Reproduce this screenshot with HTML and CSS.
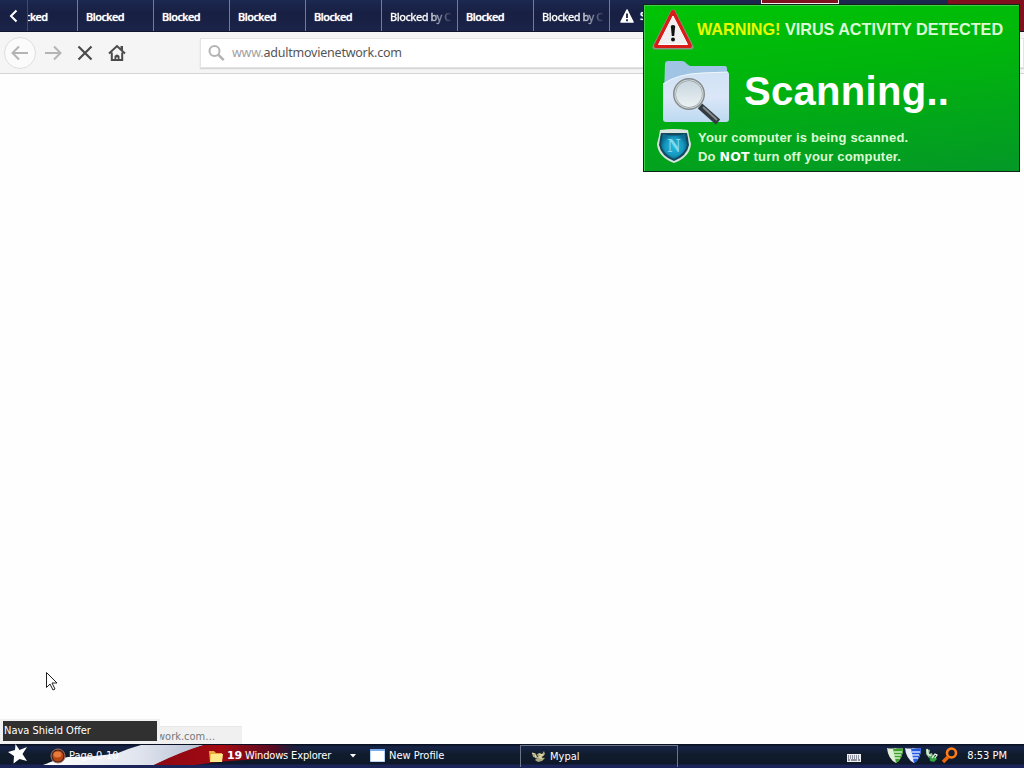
FILE: index.html
```html
<!DOCTYPE html>
<html lang="en">

<head>
    <meta charset="UTF-8">
    <title>Mypal</title>
    <link rel="stylesheet" href="styles.css">
</head>

<body>
    <div class="desktop">
        <!-- Tabs -->
        <header class="tabs">
            <div class="tab-scroll">
                <svg width="28" height="31" viewBox="0 0 28 31"><path d="M16.500 10.500L11 16l5.500 5.500" fill="none" stroke="#fff" stroke-width="2"/></svg>
            </div>
            <div class="tab first">cked</div>
            <div class="tab">Blocked</div>
            <div class="tab">Blocked</div>
            <div class="tab">Blocked</div>
            <div class="tab">Blocked</div>
            <div class="tab fade">Blocked by C</div>
            <div class="tab">Blocked</div>
            <div class="tab fade">Blocked by C</div>
            <div class="tab alert">
                <svg width="14" height="14" viewBox="0 0 14 14"><path d="M7 1L13 13H1Z" fill="#fff" stroke="#fff" stroke-width="1.600" stroke-linejoin="round"/><path d="M7 4.500v4.500M7 10.300v1.900" stroke="#1a2142" stroke-width="1.800"/></svg>
                S
            </div>
            <div class="flag-red"></div>
        </header>

        <!-- Navigation bar -->
        <nav class="toolbar">
            <div class="nav-btn back">
                <svg width="20" height="20" viewBox="0 0 20 20"><path d="M18 10H3M9 3.500L2.500 10 9 16.500" fill="none" stroke="#b4b4b4" stroke-width="2"/></svg>
            </div>
            <div class="nav-btn">
                <svg width="20" height="20" viewBox="0 0 20 20"><path d="M2 10h15M11 3.500l6.500 6.500-6.500 6.500" fill="none" stroke="#b4b4b4" stroke-width="2"/></svg>
            </div>
            <div class="nav-btn">
                <svg width="20" height="20" viewBox="0 0 20 20"><path d="M3.500 3.500l13 13M16.500 3.500l-13 13" fill="none" stroke="#4b4b4b" stroke-width="2.200"/></svg>
            </div>
            <div class="nav-btn">
                <svg width="20" height="20" viewBox="0 0 20 20"><path d="M2 10.500L10 3l8 7.500M4.800 9.500V17h10.400V9.500" fill="none" stroke="#4b4b4b" stroke-width="2"/><path d="M13.500 3h2.500v5l-2.500-2.500zM7.500 18v-5q2.500-3 5 0v5h-1.700v-3.500H9.200V18z" fill="#4b4b4b"/></svg>
            </div>
            <div class="url-bar">
                <svg width="18" height="18" viewBox="0 0 18 18"><circle cx="6.500" cy="7" r="5" fill="none" stroke="#b3b3b3" stroke-width="2"/><path d="M10.200 10.700l5.500 5.500" stroke="#b3b3b3" stroke-width="2.600"/></svg>
                <span class="url"><i>www.</i>adultmovienetwork.com</span>
            </div>
        </nav>

        <main class="page"></main>

        <!-- Taskbar -->
        <footer class="taskbar">
            <svg class="flag" width="340" height="22" viewBox="0 0 340 22">
                <defs>
                    <linearGradient id="white" x1="0" x2="1"><stop offset="0" stop-color="#fff"/><stop offset=".6" stop-color="#e0e4ee"/><stop offset="1" stop-color="#b5bfd2"/></linearGradient>
                    <linearGradient id="red" x1="0" x2="1"><stop offset="0" stop-color="#8c0812"/><stop offset=".45" stop-color="#a30a12"/><stop offset=".8" stop-color="#560b22"/><stop offset="1" stop-color="#101c3c" stop-opacity="0"/></linearGradient>
                </defs>
                <path d="M43 21Q58 15 68 13Q95 13 118 9Q130 4 141 1H204Q185 7 154 21Z" fill="url(#white)"/>
                <path d="M154 21Q180 8 204 1H305Q300 13 260 15Q220 17 195 21Z" fill="url(#red)"/>
            </svg>
            <div class="start">
                <svg width="22" height="20" viewBox="0 0 22 20"><path d="M8.500 0l4 6 7.500-3-4.500 7 4.500 7-7.500-2-6 4.500.5-7.500-6-4 7-2z" fill="#fff"/></svg>
            </div>
            <div class="task player">
                <svg width="16" height="16" viewBox="0 0 16 16"><circle cx="8" cy="8" r="7" fill="#35231f" stroke="#ae7360"/><circle cx="8" cy="8" r="5.500" fill="#b84512"/><ellipse cx="7.500" cy="6.500" rx="4" ry="3" fill="#e87a3b"/></svg>
                <span>Page 0-10</span>
            </div>
            <div class="task explorer">
                <svg width="16" height="14" viewBox="0 0 16 14"><path d="M1 2h5l2 2h6v9H2z" fill="#ecac3b"/><path d="M3 5h12l-1 8H2z" fill="#ffe888"/></svg>
                <span><b>19</b> Windows Explorer</span>
                <svg class="caret" width="6" height="4" viewBox="0 0 6 4"><path d="M0 0h6L3 3.500z" fill="#fff"/></svg>
            </div>
            <div class="task profile">
                <svg width="15" height="13" viewBox="0 0 15 13"><path d="M.5.500h14v12H.5z" fill="#fff" stroke="#b8d4f5"/><path d="M0 0h15v2H0z" fill="#79aceb"/></svg>
                <span>New Profile</span>
            </div>
            <div class="task mypal">
                <svg width="16" height="14" viewBox="0 0 16 14"><path d="M1 4l4 2 3-2 3 1 2-3 1 3-3 3 3 1-3 3-4 1-3-2 2-2-4-1z" fill="#aaa681"/><path d="M1 4l3 1 1 4M8 5l4 1-4 2 4 2" fill="none" stroke="#e2dca8" stroke-width="1.200"/><path d="M5 5l2 3M10 2v2M11 9l2-1" stroke="#302d1c"/></svg>
                <span>Mypal</span>
            </div>
            <div class="tray">
                <svg class="keyboard" width="14" height="8" viewBox="0 0 14 8"><path d="M0 0h14v8H0z" fill="#eee"/><path d="M1 2h12M1 4h12" stroke="#303650" stroke-dasharray="1 1"/><path d="M1 6h2M4 6h6M11 6h2" stroke="#303650"/></svg>
                <svg width="17" height="17" viewBox="0 0 17 17"><path d="M0 1q4 1 8 0 4 1 8 0 0 11-7 15Q1 12 0 1z" fill="#dff0d5"/><path d="M6 1.500q5 .5 10-.5 0 11-7 15z" fill="#3fa02e"/><path d="M7 5h8M7 8h7M8 11h5" stroke="#d2f1c7" stroke-width="1.400"/></svg>
                <svg width="17" height="17" viewBox="0 0 17 17"><path d="M0 1q4 1 8 0 4 1 8 0 0 11-7 15Q1 12 0 1z" fill="#e5edff"/><path d="M6 1.500q5 .5 10-.5 0 11-7 15z" fill="#2459dd"/><path d="M7 5h8M7 8h7M8 11h5" stroke="#d0deff" stroke-width="1.400"/></svg>
                <svg width="17" height="17" viewBox="0 0 17 17"><path d="M3 2l4 1-1 4 3-1 1 3-4 2-3-4z" fill="#9dc7a0"/><path d="M6 8l5 1 3 3-3 3-4-1z" fill="#31a642"/><path d="M4 2l1 5 3 2M9 11l3-4 2 1-2 3" fill="none" stroke="#e3f1df" stroke-width="1.300"/></svg>
                <svg width="17" height="17" viewBox="0 0 17 17"><circle cx="10.500" cy="6" r="4.500" fill="none" stroke="#ff7c16" stroke-width="2.600"/><path d="M7 10l-5 5" stroke="#e9650e" stroke-width="3.500"/></svg>
                <span class="clock">8:53 PM</span>
            </div>
        </footer>

        <div class="status">work.com…</div>
        <div class="tooltip">Nava Shield Offer</div>
        <div class="window-edge"></div>

        <!-- Scanner popup -->
        <section class="popup">
            <div class="warning">
                <svg width="42" height="42" viewBox="0 0 42 42">
                    <path d="M21 3L39 38H3Z" fill="#8f9385" stroke="#8f9385" stroke-width="5" stroke-linejoin="round"/>
                    <path d="M21 3L38 37H4Z" fill="#d91c18" stroke="#d91c18" stroke-width="4" stroke-linejoin="round"/>
                    <path d="M21 7L35.500 35.500h-29z" fill="#f1efef" stroke="#fff" stroke-width="1" stroke-linejoin="round"/>
                    <path d="M18.800 17q2.200-2 4.400 0l-1 10h-2.400z" fill="#111"/><circle cx="21" cy="30.500" r="2" fill="#111"/>
                </svg>
                <h1><em>WARNING!</em> <span>VIRUS ACTIVITY DETECTED</span></h1>
            </div>
            <div class="scan">
                <svg width="70" height="66" viewBox="0 0 70 66">
                    <defs>
                        <linearGradient id="folder" x1="0" y1="0" x2="0" y2="1"><stop offset="0" stop-color="#cfe2f4"/><stop offset=".5" stop-color="#dbe7f8"/><stop offset="1" stop-color="#bcd9f0"/></linearGradient>
                        <linearGradient id="glass" x1="0" y1="0" x2="0" y2="1"><stop offset="0" stop-color="#c5d4de"/><stop offset="1" stop-color="#edf3f3"/></linearGradient>
                    </defs>
                    <path d="M3 4q0-3 3-3h14q3 0 5 3l3 2h35q2 0 2 3v26H2z" fill="#a0c4e4"/>
                    <path d="M1 24Q15 14 40 13l25-1q2 0 2 2v45q0 3-3 3H4q-3 0-3-3z" fill="url(#folder)"/>
                    <path d="M1 24Q15 14 40 13l26-1" fill="none" stroke="#eff9fc"/>
                    <path d="M38 46L56 62" stroke="#333b40" stroke-width="6.500"/>
                    <path d="M41 47L55 60" stroke="#858d91" stroke-width="1.800"/>
                    <circle cx="27" cy="34" r="14.500" fill="url(#glass)" stroke="#858b8c" stroke-width="3"/>
                    <circle cx="27" cy="34" r="14" fill="none" stroke="#d0d7d9" stroke-width="1.200"/>
                </svg>
                <h2>Scanning..</h2>
            </div>
            <div class="message">
                <svg width="36" height="36" viewBox="0 0 36 36">
                    <defs><radialGradient id="shield"><stop offset="0" stop-color="#25b9dd"/><stop offset=".7" stop-color="#1599c0"/><stop offset="1" stop-color="#0b6e92"/></radialGradient></defs>
                    <path d="M4 2q14-2 28 0l1 6 2 8q-1 13-17 19Q2 29 1 16l2-8z" fill="#dae4df"/>
                    <path d="M5 5h26l1 5 1 7q-2 11-15 16Q5 28 3 17l1-7z" fill="#12495f"/>
                    <path d="M7 6q11 3 22 0l2 11q-2 9-13 14Q7 26 5 17z" fill="url(#shield)"/>
                    <text class="shield-letter" x="18" y="24" text-anchor="middle">N</text>
                </svg>
                <p>Your computer is being scanned.<br>Do <b>NOT</b> turn off your computer.</p>
            </div>
        </section>

        <svg class="cursor" width="14" height="21" viewBox="0 0 14 21"><path d="M1.500 1.500v15l3.500-3.500 3 6 2-1-3-6h5z" fill="#fff" stroke="#222" stroke-width="1"/></svg>
    </div>
</body>

</html>
```
FILE: styles.css
```css
* {
    box-sizing: border-box;
}

body {
    margin: 0;
    overflow: hidden;
    font-family: "DejaVu Sans Condensed", "DejaVu Sans", sans-serif;
    font-size: 11px;
}

svg {
    display: block;
    flex-shrink: 0;
}

.desktop {
    position: relative;
    display: flex;
    flex-direction: column;
    width: 1024px;
    height: 768px;
    background: #fefefe;
}

/* Tabs */
.tabs {
    display: flex;
    height: 32px;
    color: #fff;
    background: linear-gradient(#1c2850, #171f42 45%, #1b2549);
    border-bottom: 1px solid #11152e;
}

.tab-scroll {
    width: 28px;
    border-right: 1px solid #404a6b;
}

.tab {
    flex: none;
    width: 76px;
    padding: 0 8px;
    line-height: 34px;
    font-family: "Noto Sans", sans-serif;
    font-weight: 500;
    letter-spacing: -0.5px;
    white-space: nowrap;
    overflow: hidden;
    border-right: 1px solid #737b96;
    text-shadow: 0 0 1px #fff;
}

.first {
    width: 50px;
    padding: 0 0 0 0;
    text-indent: -3px;
}

.fade {
    color: transparent;
    background: linear-gradient(90deg, #fff 45px, #858ba4 58px, #1a2142 72px);
    background-clip: text;
    -webkit-background-clip: text;
    -webkit-text-stroke: 0.3px transparent;
    text-shadow: none;
}

.alert {
    display: flex;
    align-items: center;
    gap: 6px;
    padding-left: 10px;
    border: none;
}

.flag-red {
    width: 76px;
    margin-left: auto;
    background: #80101e;
}

/* Navigation bar */
.toolbar {
    display: flex;
    align-items: center;
    height: 42px;
    padding-left: 4px;
    background: #f5f5f5;
    border-bottom: 1px solid #d4d4d4;
}

.nav-btn {
    display: flex;
    align-items: center;
    justify-content: center;
    width: 32px;
}

.back {
    height: 32px;
    margin-right: 1px;
    border: 1px solid #dedede;
    border-radius: 50%;
    background: #fbfbfb;
}

.url-bar {
    display: flex;
    align-items: center;
    gap: 6px;
    flex: 1;
    height: 30px;
    margin-left: 67px;
    padding-left: 7px;
    background: #fff;
    border: 1px solid #e4e4e4;
    box-shadow: 0 1px 1px #d5d5d5;
}

.url {
    font-family: "Noto Sans", sans-serif;
    font-size: 12.5px;
    letter-spacing: -0.22px;
    color: #555;
}

.url i {
    font-style: normal;
    color: #a0a0a0;
}

.page {
    flex: 1;
}

/* Taskbar */
.taskbar {
    position: relative;
    display: flex;
    align-items: center;
    height: 24px;
    padding-bottom: 1px;
    color: #fff;
    background: linear-gradient(#080d1c, #172448 3px, #101c2d 10px, #0e1828 20px, #1b2459 21px);
}

.taskbar > div {
    position: relative;
}

.flag {
    position: absolute;
    left: 0;
    top: 0;
}

.start {
    width: 50px;
    padding-left: 7px;
    padding-bottom: 3px;
}

.task {
    display: flex;
    align-items: center;
    gap: 3px;
    height: 22px;
    white-space: nowrap;
}

.player {
    width: 158px;
}

.explorer {
    width: 162px;
    letter-spacing: -0.15px;
}

.explorer b {
    font-family: "DejaVu Sans", sans-serif;
}

.caret {
    margin-left: auto;
    margin-right: 14px;
}

.profile {
    width: 150px;
    gap: 4px;
}

.mypal {
    width: 158px;
    padding-left: 10px;
    border: 1px solid #6d7486;
    border-bottom: none;
}

.tray {
    display: flex;
    align-items: center;
    gap: 1px;
    margin-left: auto;
    padding-right: 17px;
}

.keyboard {
    margin-top: 4px;
    margin-right: 25px;
}

.clock {
    margin-left: 8px;
    white-space: nowrap;
}

/* Things lying over the page */
.status {
    position: absolute;
    left: 157px;
    top: 726px;
    width: 85px;
    height: 18px;
    line-height: 20px;
    color: #777;
    background: #f0f0f0;
    border-top: 1px solid #e8e8e8;
    overflow: hidden;
}

.tooltip {
    position: absolute;
    left: 0;
    top: 719px;
    width: 160px;
    height: 25px;
    padding-left: 1px;
    line-height: 20px;
    color: #fff;
    background: #303030;
    border: 3px solid #f1f1f1;
    border-top-width: 2px;
}

.window-edge {
    position: absolute;
    left: 761px;
    top: 0;
    width: 78px;
    height: 4px;
    background: #81101e;
    border: 1px solid #eee;
    border-top: none;
}

.popup {
    position: absolute;
    left: 643px;
    top: 4px;
    display: flex;
    flex-direction: column;
    width: 377px;
    height: 168px;
    padding: 3px 8px 0;
    font-family: "Liberation Sans", sans-serif;
    color: #dcfbd5;
    background: linear-gradient(174deg, #00c405, #00b50c 40%, #049827);
    border: 1px solid #102515;
    box-shadow: inset 1px 1px #40cd48;
}

.warning {
    display: flex;
    align-items: center;
    gap: 3px;
    height: 46px;
}

.warning svg {
    margin-bottom: 2px;
}

.warning h1 {
    margin: 0;
    padding-bottom: 3px;
    font-size: 16.2px;
    letter-spacing: -0.02px;
    white-space: nowrap;
}

.warning em {
    font-style: normal;
    color: #e8fb00;
}

.scan {
    display: flex;
    align-items: center;
    gap: 12px;
    height: 74px;
    padding-left: 10px;
}

.scan svg {
    margin-top: 3px;
}

.scan h2 {
    margin: 0;
    padding-top: 1px;
    font-size: 40px;
    letter-spacing: 0.3px;
    color: #fff;
}

.message {
    display: flex;
    gap: 6px;
    padding-left: 4px;
}

.message p {
    margin: 0;
    font-size: 13px;
    line-height: 19px;
    font-weight: bold;
    letter-spacing: 0.2px;
    white-space: nowrap;
}

.message b {
    font-family: "DejaVu Sans", sans-serif;
    font-size: 12.5px;
    color: #fff;
}

.shield-letter {
    font: bold 18px "Liberation Serif", serif;
    fill: #7ed9ea;
}

.cursor {
    position: absolute;
    left: 45px;
    top: 671px;
}
```
